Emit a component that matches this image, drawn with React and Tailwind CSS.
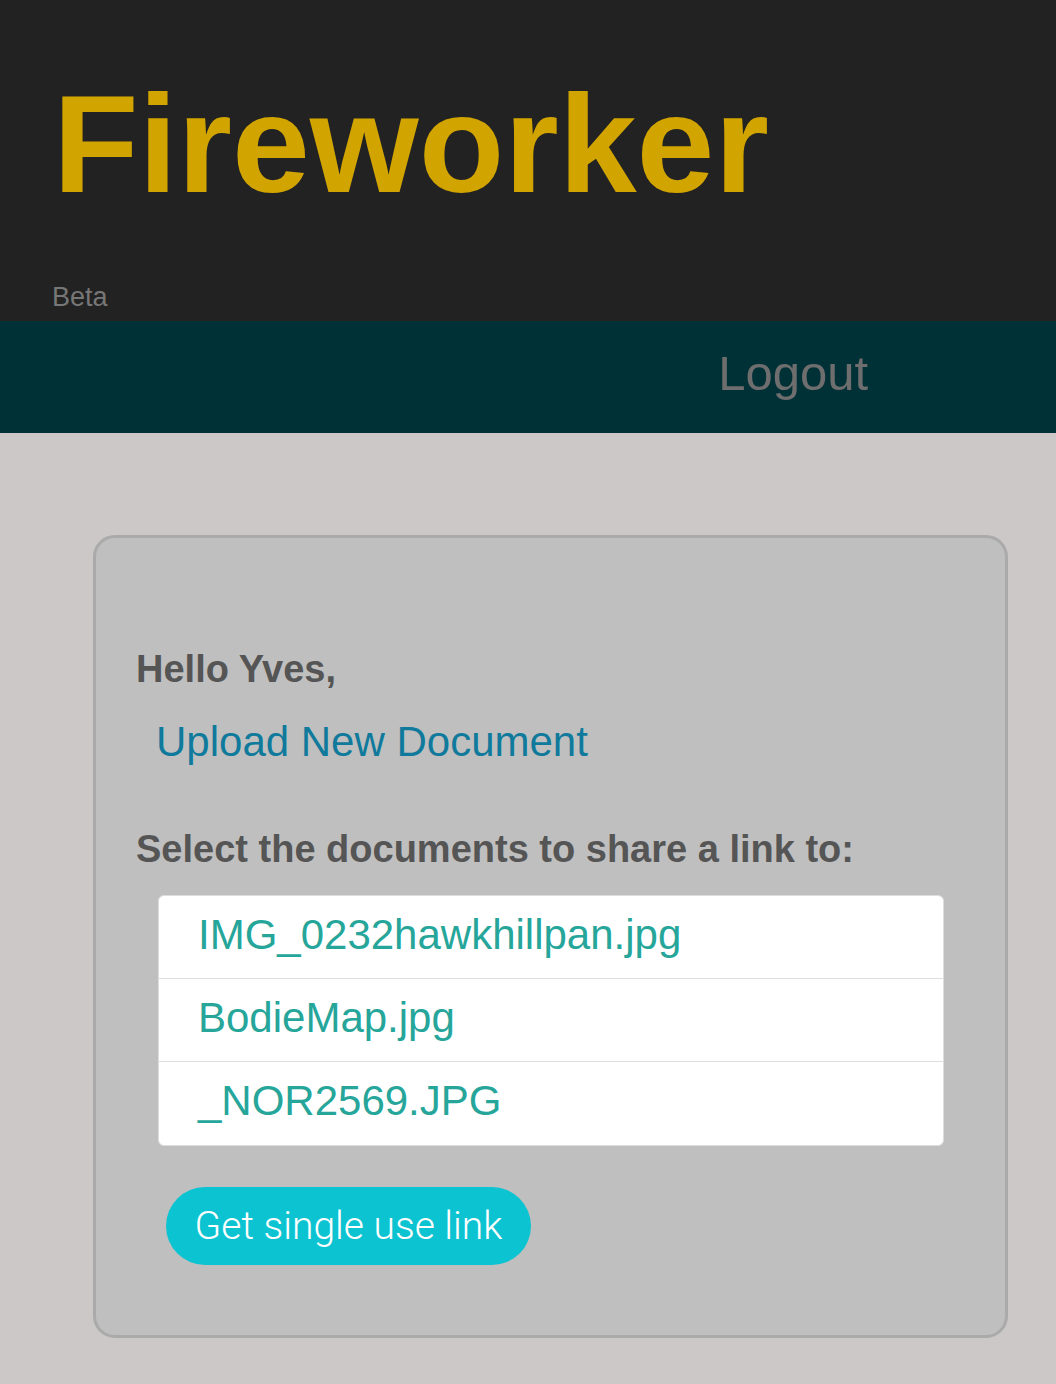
const files = ["IMG_0232hawkhillpan.jpg", "BodieMap.jpg", "_NOR2569.JPG"];

const App = () => {
    return (
        <div className="min-h-screen bg-[#cbc8c7] font-['Liberation_Sans',Arial,sans-serif]">
            <header className="bg-[#222222] h-[321px] pt-[74px]">
                <h1 className="ml-[53px] text-[140px] leading-none font-bold text-[#d2a400]">
                    Fireworker
                </h1>
                <div className="ml-[52px] mt-[68px] text-[27px] leading-[30px] text-[#777777]">
                    Beta
                </div>
            </header>
            <nav className="bg-[#003137] h-[112px] pt-[24px] flex justify-end pr-[188px]">
                <a href="#" className="text-[49px] leading-[56px] text-[#6e6e6e]">
                    Logout
                </a>
            </nav>
            <main className="pt-[102px] pb-[47px]">
                <div className="ml-[93px] w-[915px] rounded-[22px] border-[3px] border-[#aaaaaa] bg-[#bfbfbf] pt-[109px] pb-[70px] pl-[40px]">
                    <p className="text-[38px] leading-[44px] font-bold text-[#555555]">
                        Hello Yves,
                    </p>
                    <a
                        href="#"
                        className="block w-max ml-[20px] mt-[27px] text-[42px] leading-[48px] text-[#0f7a9b]"
                    >
                        Upload New Document
                    </a>
                    <p className="mt-[61px] text-[38px] leading-[44px] font-bold text-[#555555]">
                        Select the documents to share a link to:
                    </p>
                    <ul className="ml-[22px] mt-[24px] w-[786px] rounded-[6px] border border-[#dddddd] bg-white">
                        {files.map((f, i) => (
                            <li
                                key={f}
                                className={
                                    "h-[83px] pt-[15px] pl-[39px] " +
                                    (i < files.length - 1 ? "border-b border-[#dddddd]" : "")
                                }
                            >
                                <span className="text-[42px] leading-[48px] text-[#26a69a]">{f}</span>
                            </li>
                        ))}
                    </ul>
                    <button
                        type="button"
                        className="ml-[30px] mt-[41px] w-[365px] h-[78px] rounded-full bg-[#0cc3d1] text-white text-[39px] font-light font-['Roboto',sans-serif] flex items-center justify-center"
                    >
                        Get single use link
                    </button>
                </div>
            </main>
        </div>
    );
};

export default App;
